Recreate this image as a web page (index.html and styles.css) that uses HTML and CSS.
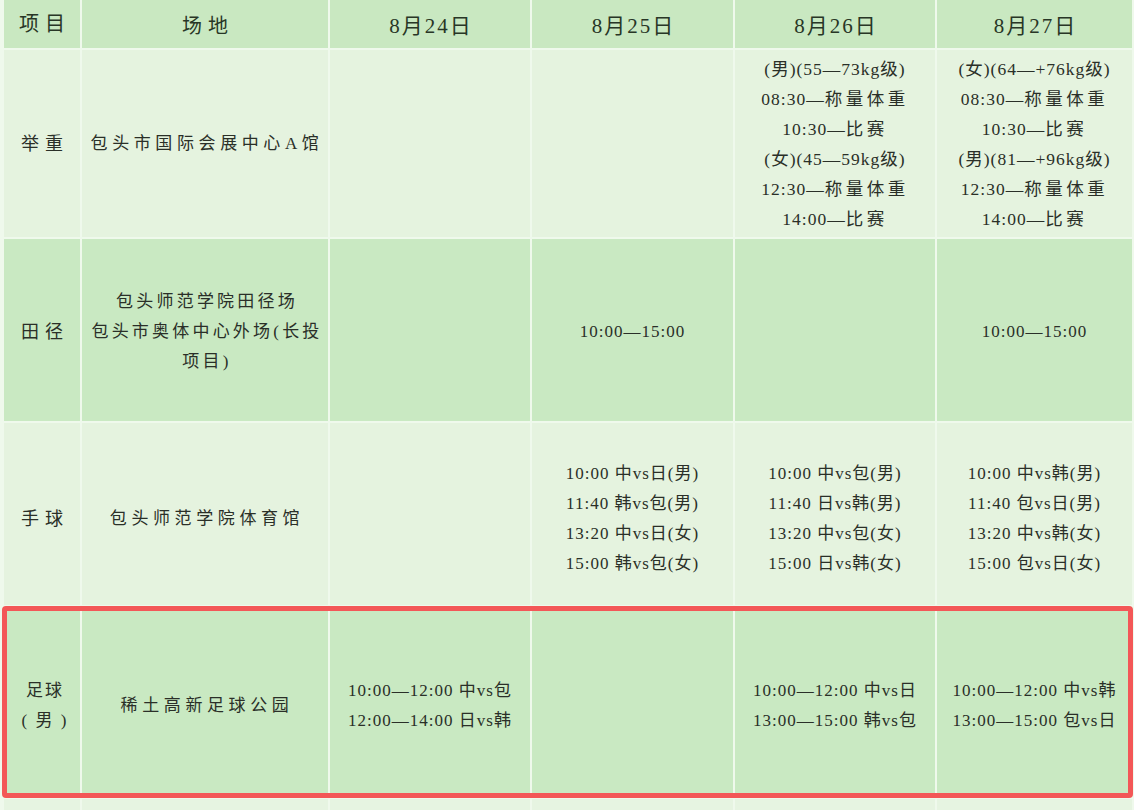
FILE: index.html
```html
<!DOCTYPE html>
<html lang="zh-CN">
<head>
<meta charset="utf-8">
<title>赛程表</title>
<link rel="stylesheet" href="styles.css">
</head>
<body>
<div class="sheet">
  <table class="schedule">
    <colgroup>
      <col class="col-item">
      <col class="col-venue">
      <col class="col-day">
      <col class="col-day2">
      <col class="col-day">
      <col class="col-day3">
    </colgroup>
    <thead>
      <tr class="row-head">
        <th class="item head-item">项目</th>
        <th class="head-venue">场地</th>
        <th class="head-date">8月24日</th>
        <th class="head-date">8月25日</th>
        <th class="head-date">8月26日</th>
        <th class="head-date">8月27日</th>
      </tr>
    </thead>
    <tbody>
      <tr class="row-light row-lift">
        <td class="item">举重</td>
        <td class="venue">包头市国际会展中心A馆</td>
        <td></td>
        <td></td>
        <td class="slot slot-lift">(男)(55—73kg级)<br>08:30—<span class="cj">称量体重</span><br>10:30—<span class="cj">比赛</span><br>(女)(45—59kg级)<br>12:30—<span class="cj">称量体重</span><br>14:00—<span class="cj">比赛</span></td>
        <td class="slot slot-lift">(女)(64—+76kg级)<br>08:30—<span class="cj">称量体重</span><br>10:30—<span class="cj">比赛</span><br>(男)(81—+96kg级)<br>12:30—<span class="cj">称量体重</span><br>14:00—<span class="cj">比赛</span></td>
      </tr>
      <tr class="row-dark row-track">
        <td class="item">田径</td>
        <td class="venue venue-tight">包头师范学院田径场<br>包头市奥体中心外场(长投<br>项目)</td>
        <td></td>
        <td class="slot">10:00—15:00</td>
        <td></td>
        <td class="slot">10:00—15:00</td>
      </tr>
      <tr class="row-light row-hand">
        <td class="item">手球</td>
        <td class="venue">包头师范学院体育馆</td>
        <td></td>
        <td class="slot">10:00 中vs日(男)<br>11:40 韩vs包(男)<br>13:20 中vs日(女)<br>15:00 韩vs包(女)</td>
        <td class="slot">10:00 中vs包(男)<br>11:40 日vs韩(男)<br>13:20 中vs包(女)<br>15:00 日vs韩(女)</td>
        <td class="slot">10:00 中vs韩(男)<br>11:40 包vs日(男)<br>13:20 中vs韩(女)<br>15:00 包vs日(女)</td>
      </tr>
      <tr class="row-dark row-foot">
        <td class="item item-foot">足球<br>( 男 )</td>
        <td class="venue">稀土高新足球公园</td>
        <td class="slot">10:00—12:00 中vs包<br>12:00—14:00 日vs韩</td>
        <td></td>
        <td class="slot">10:00—12:00 中vs日<br>13:00—15:00 韩vs包</td>
        <td class="slot">10:00—12:00 中vs韩<br>13:00—15:00 包vs日</td>
      </tr>
      <tr class="row-light row-next">
        <td></td><td></td><td></td><td></td><td></td><td></td>
      </tr>
    </tbody>
  </table>
  <div class="highlight"></div>
</div>
</body>
</html>
```

FILE: styles.css
```css
html, body {
  margin: 0;
  padding: 0;
  overflow: hidden;
}

body {
  background: #eff9ec;
  font-family: "Liberation Serif", "Noto Sans CJK SC", serif;
  color: #2a2f28;
}

.sheet {
  position: relative;
  width: 1134px;
  height: 810px;
  overflow: hidden;
}

.schedule {
  table-layout: fixed;
  border-collapse: separate;
  border-spacing: 2px;
  width: 1132px;
  margin: -2px 0 0 2px;
}

.col-item { width: 76px; }
.col-venue { width: 246px; }
.col-day { width: 200px; }
.col-day2 { width: 201px; }
.col-day3 { width: 195px; }

.schedule th,
.schedule td {
  padding: 0;
  text-align: center;
  vertical-align: middle;
  white-space: nowrap;
  overflow: hidden;
}

.schedule th {
  font-weight: normal;
  font-size: 20px;
  color: #283626;
}

.row-head th { background: #c9e8c1; height: 48px; }
.row-light td { background: #e5f3df; }
.row-dark td { background: #c9e9c2; }

.row-lift td { height: 187px; }
.row-track td { height: 182px; padding-top: 4px; box-sizing: border-box; }
.row-hand td { height: 182px; padding-top: 9px; box-sizing: border-box; }
.row-foot td { height: 190px; padding-top: 8px; box-sizing: border-box; }
.row-next td { height: 60px; background: #e6f4e1; }

.head-item {
  letter-spacing: 8px;
  padding-left: 8px !important;
}

.head-venue {
  letter-spacing: 6px;
  padding-left: 6px !important;
}

.head-date {
  font-size: 21px !important;
  letter-spacing: 2px;
  padding-left: 2px !important;
}

.item {
  font-size: 18px;
  letter-spacing: 6px;
  padding-left: 6px !important;
  line-height: 30px;
}

.item-foot {
  letter-spacing: 2px;
  font-size: 17px;
}

.venue {
  font-size: 17px;
  letter-spacing: 4.6px;
  padding-left: 4px !important;
  line-height: 30px;
}

.venue-tight {
  letter-spacing: 3.2px;
}

.slot {
  font-size: 17px;
  letter-spacing: 1px;
  line-height: 30px;
}

.slot-lift {
  font-size: 17.5px;
}

.cj {
  letter-spacing: 3.5px;
}

.highlight {
  position: absolute;
  left: 2px;
  top: 606px;
  width: 1131px;
  height: 192px;
  box-sizing: border-box;
  border: 5px solid #f35757;
  border-radius: 4px;
  pointer-events: none;
}
```
